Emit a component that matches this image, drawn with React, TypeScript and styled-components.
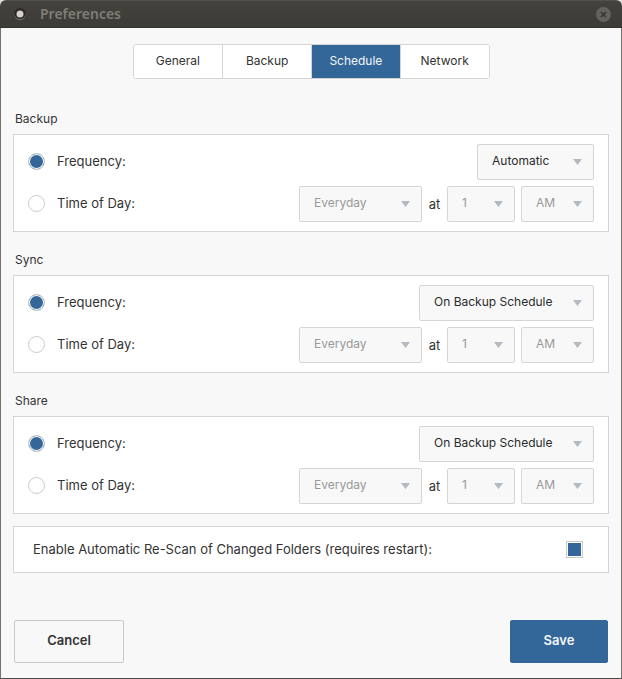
import React, { useState } from "react";
import styled, { createGlobalStyle } from "styled-components";

const blue = "#336699";
const line = "#d5d5d5";

const GlobalStyle = createGlobalStyle`
  *, *::before, *::after { box-sizing: border-box; }
  html, body, #root { height: 100%; }
  body {
    margin: 0;
    background: #dfdedd;
    color: #333;
    font: 13px/20px Inter, "Liberation Sans", sans-serif;
  }
  button, select, input { font: inherit; color: inherit; margin: 0; }
`;

const Window = styled.div`
  display: flex;
  flex-direction: column;
  min-height: 100%;
  border-radius: 6px 6px 0 0;
  overflow: hidden;
  background: #f8f8f8;
`;

const TitleBar = styled.header`
  display: flex;
  align-items: center;
  gap: 12px;
  height: 28px;
  padding: 0 11px 0 12px;
  background: linear-gradient(#43423d, #3c3b37);
  border-top: 1px solid #52514b;
  border-bottom: 1px solid #33322e;
`;

const Title = styled.h1`
  flex: 1;
  margin: 0;
  font: 600 14px/20px "Noto Sans", sans-serif;
  color: #7f7d76;
`;

const CloseButton = styled.button`
  display: flex;
  padding: 0;
  border: 0;
  background: none;
`;

const Body = styled.form`
  flex: 1;
  display: flex;
  flex-direction: column;
  padding: 16px 12px 15px;
  border: 1px solid #77716d;
  border-top: 0;
  border-bottom-color: #4a4846;
`;

const Tabs = styled.nav`
  display: grid;
  grid-template-columns: repeat(4, 1fr);
  align-self: center;
  width: 357px;
  max-width: 100%;
  height: 35px;
  border: 1px solid ${line};
  border-radius: 3px;
  background: #fff;
  overflow: hidden;
`;

const Tab = styled.button<{ $active: boolean }>`
  padding: 0 0 2px;
  border: 0;
  border-left: 1px solid ${line};
  font-size: 12px;
  background: ${(p) => (p.$active ? blue : "#fff")};
  color: ${(p) => (p.$active ? "#f4f6f9" : "#333")};
  &:first-child { border-left: 0; }
`;

const Sections = styled.div`
  display: flex;
  flex-direction: column;
  gap: 18px;
  margin-top: 30px;
`;

const SectionTitle = styled.h2`
  margin: 0 0 5px 2px;
  font-size: 12px;
  font-weight: 400;
  line-height: 20px;
`;

const Panel = styled.div`
  display: flex;
  flex-direction: column;
  gap: 6px;
  padding: 9px 14px;
  border: 1px solid ${line};
  background: #fff;
`;

const Row = styled.div`
  display: flex;
  align-items: center;
  justify-content: space-between;
  min-height: 36px;
`;

const RadioLabel = styled.label`
  display: flex;
  align-items: center;
  gap: 12px;
  padding-bottom: 2px;
`;

const Radio = styled.input.attrs({ type: "radio" })`
  appearance: none;
  width: 17px;
  height: 17px;
  border: 1px solid #ccc;
  border-radius: 50%;
  background: #fff;
  &:checked { background: ${blue}; box-shadow: inset 0 0 0 1px #fff; }
`;

const Checkbox = styled.input.attrs({ type: "checkbox" })`
  appearance: none;
  width: 17px;
  height: 17px;
  border: 1px solid #c8c8c8;
  background: #fff;
  &:checked { background: ${blue}; box-shadow: inset 0 0 0 1px #fff; }
`;

const Controls = styled.div`
  display: flex;
  align-items: center;
  gap: 6px;
`;

const Joiner = styled.span`
  min-width: 13px;
  text-align: center;
`;

const SelectBox = styled.span<{ $width: number }>`
  position: relative;
  display: flex;
  width: ${(p) => p.$width}px;
`;

const SelectField = styled.select`
  appearance: none;
  width: 100%;
  height: 36px;
  padding: 0 24px 2px 14px;
  border: 1px solid ${line};
  border-radius: 2px;
  background: #f8f8f8;
  font-size: 12px;
  color: #2b2b2b;
  &:disabled { color: #999; opacity: 1; }
`;

const Arrow = styled.svg`
  position: absolute;
  right: 12px;
  top: 15px;
  pointer-events: none;
`;

const RescanPanel = styled.label`
  display: flex;
  align-items: center;
  justify-content: space-between;
  min-height: 47px;
  margin-top: 12px;
  padding: 0 25px 0 19px;
  border: 1px solid ${line};
  background: #fff;
`;

const RescanText = styled.span`
  padding-bottom: 2px;
`;

const Footer = styled.footer`
  display: flex;
  justify-content: space-between;
  margin-top: auto;
  padding: 24px 1px 0;
`;

const ActionButton = styled.button<{ $primary?: boolean }>`
  width: ${(p) => (p.$primary ? 98 : 110)}px;
  height: 43px;
  padding: 0 0 3px;
  border: 1px solid ${(p) => (p.$primary ? blue : "#c8c8c8")};
  border-radius: 2px;
  background: ${(p) => (p.$primary ? blue : "#f8f8f8")};
  color: ${(p) => (p.$primary ? "#f4f6f9" : "#333")};
  font-size: 13px;
  font-weight: 600;
`;

interface DropdownProps {
  label: string;
  options: string[];
  width: number;
  disabled?: boolean;
}

function Dropdown({ label, options, width, disabled }: DropdownProps) {
  return (
    <SelectBox $width={width}>
      <SelectField aria-label={label} disabled={disabled}>
        {options.map((o) => (
          <option key={o}>{o}</option>
        ))}
      </SelectField>
      <Arrow width="9" height="6" viewBox="0 0 9 6" aria-hidden="true">
        <path d="M0 0H9L4.5 6Z" fill="#b3bac2" />
      </Arrow>
    </SelectBox>
  );
}

interface ScheduleProps {
  name: string;
  frequency: string;
  width: number;
}

function ScheduleSection({ name, frequency, width }: ScheduleProps) {
  const [mode, setMode] = useState("frequency");
  const timed = mode === "time";
  return (
    <section>
      <SectionTitle>{name}</SectionTitle>
      <Panel role="radiogroup" aria-label={name}>
        <Row>
          <RadioLabel>
            <Radio name={name} checked={!timed} onChange={() => setMode("frequency")} />
            Frequency:
          </RadioLabel>
          <Dropdown label={`${name} frequency`} options={[frequency]} width={width} disabled={timed} />
        </Row>
        <Row>
          <RadioLabel>
            <Radio name={name} checked={timed} onChange={() => setMode("time")} />
            Time of Day:
          </RadioLabel>
          <Controls>
            <Dropdown label={`${name} day`} options={["Everyday"]} width={123} disabled={!timed} />
            <Joiner>at</Joiner>
            <Dropdown label={`${name} hour`} options={["1", "2", "3", "4", "5", "6", "7", "8", "9", "10", "11", "12"]} width={68} disabled={!timed} />
            <Dropdown label={`${name} AM or PM`} options={["AM", "PM"]} width={73} disabled={!timed} />
          </Controls>
        </Row>
      </Panel>
    </section>
  );
}

export default function App() {
  const [tab, setTab] = useState("Schedule");
  const [rescan, setRescan] = useState(true);
  return (
    <>
      <GlobalStyle />
      <Window>
        <TitleBar>
          <svg width="16" height="16" viewBox="0 0 16 16" aria-hidden="true">
            <path d="M2.5 8.5a5.5 5.5 0 0 0 11 0Z" fill="#75736d" />
            <circle cx="8" cy="7.5" r="5.5" fill="#292825" />
            <circle cx="8" cy="8" r="3.5" fill="#d5d0ce" />
          </svg>
          <Title>Preferences</Title>
          <CloseButton type="button" aria-label="Close">
            <svg width="15" height="15" viewBox="0 0 15 15" aria-hidden="true">
              <circle cx="7.5" cy="7.5" r="7.5" fill="#64625c" />
              <path d="M5 5L10 10M10 5L5 10" stroke="#353430" strokeWidth="1.6" />
            </svg>
          </CloseButton>
        </TitleBar>
        <Body onSubmit={(e) => e.preventDefault()}>
          <Tabs>
            {["General", "Backup", "Schedule", "Network"].map((t) => (
              <Tab key={t} type="button" $active={t === tab} onClick={() => setTab(t)}>
                {t}
              </Tab>
            ))}
          </Tabs>
          <Sections>
            <ScheduleSection name="Backup" frequency="Automatic" width={117} />
            <ScheduleSection name="Sync" frequency="On Backup Schedule" width={175} />
            <ScheduleSection name="Share" frequency="On Backup Schedule" width={175} />
          </Sections>
          <RescanPanel>
            <RescanText>Enable Automatic Re-Scan of Changed Folders (requires restart):</RescanText>
            <Checkbox checked={rescan} onChange={(e) => setRescan(e.target.checked)} />
          </RescanPanel>
          <Footer>
            <ActionButton type="button">Cancel</ActionButton>
            <ActionButton type="submit" $primary>Save</ActionButton>
          </Footer>
        </Body>
      </Window>
    </>
  );
}
